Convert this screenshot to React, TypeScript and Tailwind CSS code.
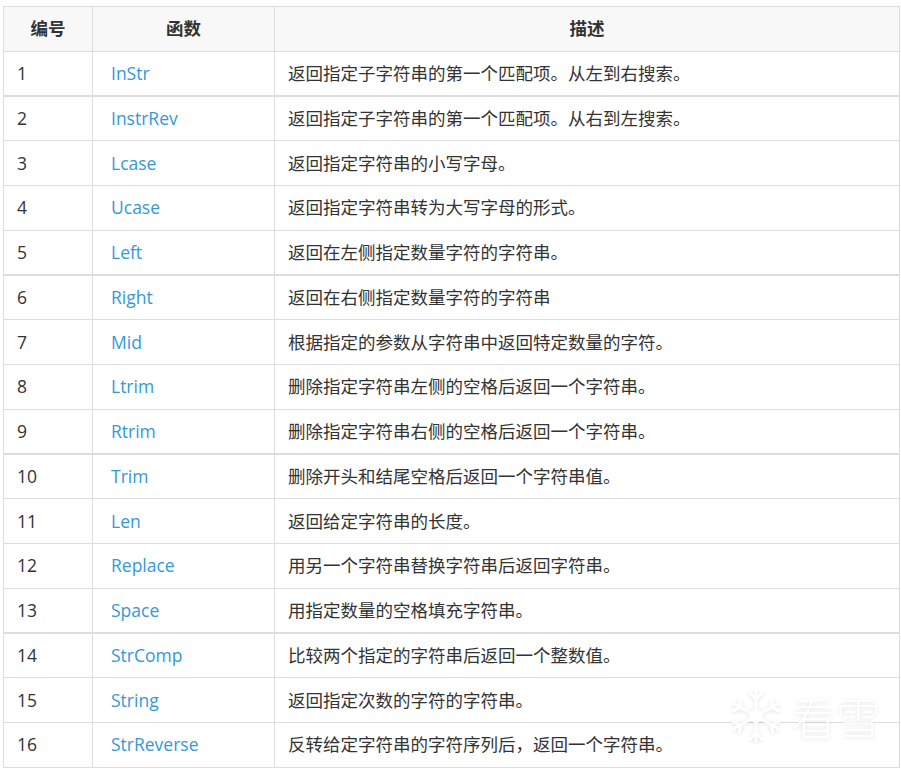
const rows: [string, string, boolean?, boolean?][] = [
  ["InStr", "返回指定子字符串的第一个匹配项。从左到右搜索。", true],
  ["InstrRev", "返回指定子字符串的第一个匹配项。从右到左搜索。"],
  ["Lcase", "返回指定字符串的小写字母。", false, true],
  ["Ucase", "返回指定字符串转为大写字母的形式。"],
  ["Left", "返回在左侧指定数量字符的字符串。", true],
  ["Right", "返回在右侧指定数量字符的字符串"],
  ["Mid", "根据指定的参数从字符串中返回特定数量的字符。", false, true],
  ["Ltrim", "删除指定字符串左侧的空格后返回一个字符串。"],
  ["Rtrim", "删除指定字符串右侧的空格后返回一个字符串。", true],
  ["Trim", "删除开头和结尾空格后返回一个字符串值。"],
  ["Len", "返回给定字符串的长度。", false, true],
  ["Replace", "用另一个字符串替换字符串后返回字符串。"],
  ["Space", "用指定数量的空格填充字符串。", true],
  ["StrComp", "比较两个指定的字符串后返回一个整数值。"],
  ["String", "返回指定次数的字符的字符串。", false, true],
  ["StrReverse", "反转给定字符串的字符序列后，返回一个字符串。"],
];
const heights = [44, 45, 45, 45, 44, 45, 45, 45, 44, 45, 45, 45, 44, 45, 45, 45];

export default function App() {
  return (
    <div className="relative w-[901px] h-[769px] overflow-hidden bg-white pt-[6px] pl-[3px] font-['Open_Sans','Noto_Sans_CJK_SC',sans-serif] text-[17.5px] text-[#333333]">
      <table className="w-[897px] table-fixed border-collapse">
        <colgroup>
          <col className="w-[89px]" />
          <col className="w-[182px]" />
          <col />
        </colgroup>
        <thead>
          <tr className="h-[45px] bg-[#f8f8f8] text-[17.5px] font-bold">
            <th className="border border-[#dddddd] p-0 pb-[1px] text-center">编号</th>
            <th className="border border-[#dddddd] p-0 pb-[1px] text-center">函数</th>
            <th className="border border-[#dddddd] p-0 pb-[1px] text-center">描述</th>
          </tr>
        </thead>
        <tbody>
          {rows.map(([fn, desc, thick, low], i) => {
            const edge = `border-x border-t border-[#dddddd] ${thick ? "border-b-2" : "border-b"} ${low ? "pt-[1px]" : "pb-[1px]"}`;
            return (
              <tr key={fn} style={{ height: heights[i] }}>
                <td className={`${edge} pl-[13px]`}>{i + 1}</td>
                <td className={`${edge} pl-[18px] text-[#3498db]`}>{fn}</td>
                <td className={`${edge} pl-[13px]`}>{desc}</td>
              </tr>
            );
          })}
        </tbody>
      </table>
      <div className="absolute left-[729px] top-[686px] flex items-center gap-[8px] opacity-90 [filter:drop-shadow(0_1px_2px_rgba(0,0,0,0.12))]">
        <svg width="54" height="60" viewBox="0 0 54 58" fill="none" stroke="#ffffff" strokeWidth="3">
          <g>
            <path d="M27 3V55M27 12l-7-7M27 12l7-7M27 46l-7 7M27 46l7 7" />
            <path d="M4 16L50 42M12 20.500L3 24M12 20.500L10 11M42 37.500L51 34M42 37.500L44 47" />
            <path d="M50 16L4 42M42 20.500L51 24M42 20.500L44 11M12 37.500L3 34M12 37.500L10 47" />
          </g>
          <path d="M27 23l5 3v6l-5 3-5-3v-6z" fill="#ffffff" />
        </svg>
        <span className="text-[45px] leading-none font-light text-white font-['Noto_Sans_CJK_SC',sans-serif]">看雪</span>
      </div>
    </div>
  );
}
